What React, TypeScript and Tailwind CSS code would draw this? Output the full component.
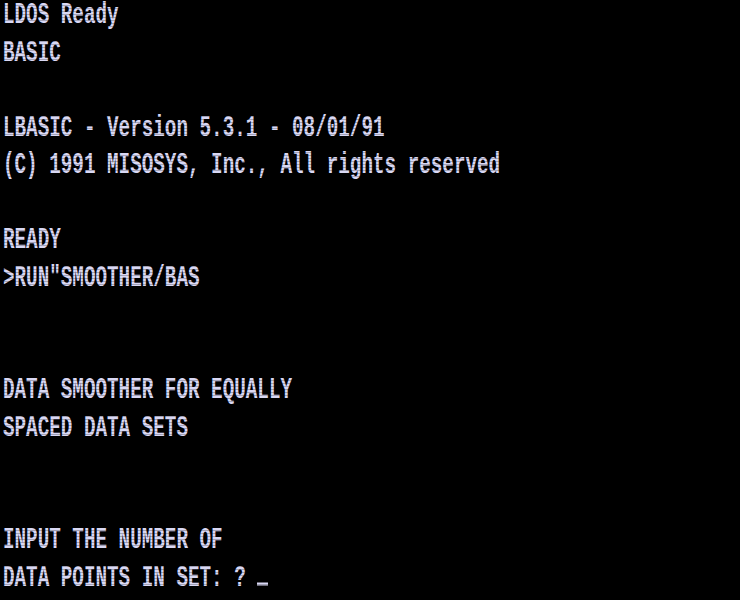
import React from 'react';

const lines: string[] = [
  'LDOS Ready',
  'BASIC',
  '',
  'LBASIC - Version 5.3.1 - 08/01/91',
  '(C) 1991 MISOSYS, Inc., All rights reserved',
  '',
  'READY',
  '>RUN"SMOOTHER/BAS',
  '',
  '',
  'DATA SMOOTHER FOR EQUALLY',
  'SPACED DATA SETS',
  '',
  '',
  'INPUT THE NUMBER OF',
  'DATA POINTS IN SET: ? ',
];

const Row: React.FC<{ text: string; cursor?: boolean }> = ({ text, cursor }) => (
  <div className="h-[37.5px] pl-[3px]">
    <div className="origin-top-left scale-y-150 whitespace-pre font-['Liberation_Mono',monospace] font-bold text-[19.27px] leading-[1.1] text-[#d9d8f4]">
      {text}
      {cursor && <span className="inline-block align-baseline w-[11px] h-[2px] bg-[#d9d8f4]"></span>}
    </div>
  </div>
);

const App: React.FC = () => {
  return (
    <div className="w-[740px] h-[600px] bg-black overflow-hidden relative">
      {lines.map((line, i) => (
        <Row key={i} text={line} cursor={i === lines.length - 1} />
      ))}
      {/* scan lines */}
      <div className="absolute inset-0 pointer-events-none bg-[repeating-linear-gradient(to_bottom,transparent_0px,transparent_2px,rgba(0,0,0,0.25)_2px,rgba(0,0,0,0.25)_3px)]"></div>
    </div>
  );
};

export default App;
